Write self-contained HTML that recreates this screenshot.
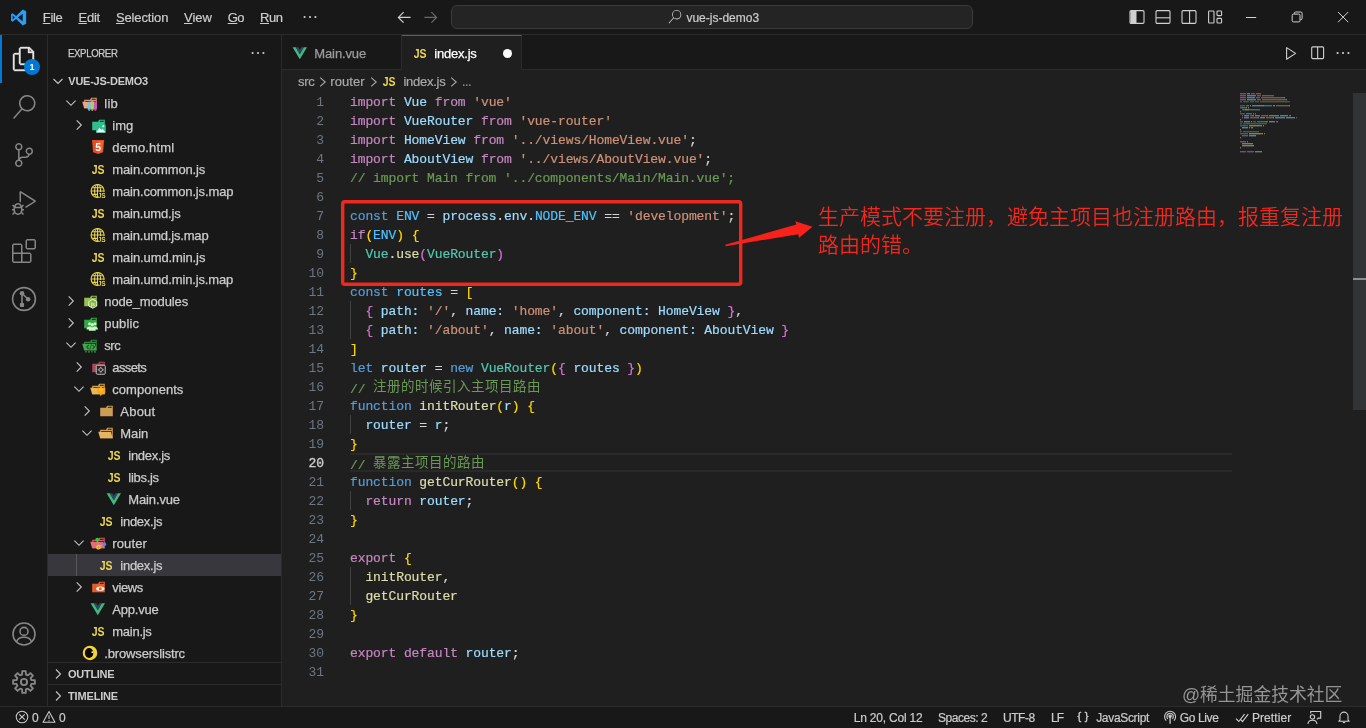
<!DOCTYPE html>
<html lang="zh">
<head>
<meta charset="utf-8">
<title>index.js - vue-js-demo3 - Visual Studio Code</title>
<style>
*{box-sizing:border-box;margin:0;padding:0}
html,body{width:1366px;height:728px;overflow:hidden;background:#181818}
body{position:relative;font-family:"Liberation Sans","Noto Sans CJK SC",sans-serif;font-size:13px;color:#cccccc;-webkit-font-smoothing:antialiased}
#root{position:absolute;left:0;top:0;width:1366px;height:728px;will-change:transform}
.abs{position:absolute}
svg{display:block;overflow:visible}
/* title bar */
#title{position:absolute;left:0;top:0;width:1366px;height:35px;background:#181818;border-bottom:1px solid #2b2b2b}
.menu{-webkit-text-stroke:0.200px currentColor;position:absolute;top:0px;height:35px;line-height:35px;font-size:13px;color:#cccccc;white-space:nowrap}
.menu u{text-decoration:underline;text-underline-offset:1px}
#cmd{position:absolute;left:451px;top:5px;width:522px;height:24px;border:1px solid #3b3b3b;border-radius:6px;background:#242424}
#cmd span{position:absolute;left:234.400px;top:1px;-webkit-text-stroke:0.200px currentColor;line-height:22px;font-size:12px;color:#cccccc;white-space:nowrap}
/* activity bar */
#act{position:absolute;left:0;top:35px;width:48px;height:671px;background:#181818;border-right:1px solid #2b2b2b}
#actind{position:absolute;left:0;top:35px;width:2px;height:48px;background:#0078d4}
#badge{position:absolute;left:24px;top:59px;width:16px;height:16px;border-radius:8px;background:#0078d4;color:#fff;font-size:9px;font-weight:bold;line-height:16px;text-align:center}
/* sidebar */
#side{position:absolute;left:48px;top:35px;width:234px;height:671px;background:#181818;border-right:1px solid #2b2b2b}
.tl{-webkit-text-stroke:0.250px currentColor;position:absolute;height:22px;line-height:22px;font-size:13px;color:#cccccc;white-space:nowrap}
.sel{position:absolute;left:48px;width:233px;height:22px;background:#37373d}
.jsic{position:absolute;width:16px;height:16px;line-height:16px;font-size:10.500px;font-weight:bold;color:#ecd84c;text-align:center;letter-spacing:-0.200px;transform:scaleY(1.160);transform-origin:50% 72%}
.hdr{position:absolute;margin-top:-1px;font-size:11px;font-weight:bold;color:#cccccc;white-space:nowrap;height:22px;line-height:22px}
/* editor */
#tabs{position:absolute;left:282px;top:35px;width:1084px;height:35px;background:#181818;border-bottom:1px solid #2b2b2b}
.tab{position:absolute;top:35px;height:35px;border-right:1px solid #2b2b2b}
#ed{position:absolute;left:282px;top:70px;width:1084px;height:636px;background:#1f1f1f}
.bc{-webkit-text-stroke:0.200px currentColor;position:absolute;top:71px;height:22px;line-height:22px;font-size:13px;color:#a9a9a9;white-space:nowrap}
.ln{position:absolute;left:282px;width:42px;height:19px;line-height:19px;text-align:right;font-family:"Liberation Mono","DejaVu Sans Mono",monospace;font-size:13px;letter-spacing:-0.1px;color:#6e7681}
.ln.cur{color:#cccccc;-webkit-text-stroke:0.350px #cccccc}
.cl{-webkit-text-stroke:0.200px currentColor;position:absolute;left:350px;height:19px;line-height:19px;white-space:pre;font-family:"Liberation Mono","DejaVu Sans Mono",monospace;font-size:13px;letter-spacing:-0.1px;color:#d4d4d4}
.cl .cjk{font-family:"Noto Sans CJK SC",sans-serif;font-size:13.500px;letter-spacing:0.500px;color:#6a9955;position:relative;top:-2px;-webkit-text-stroke:0}
.guide{position:absolute;left:350px;width:1px;height:19px;background:#404040}
#curline{position:absolute;left:350px;top:453px;width:882px;height:19px;border-top:2px solid #292929;border-bottom:2px solid #292929}
.minimap{position:absolute;left:1240px;top:93px}
#scroll{position:absolute;left:1353px;top:93px;width:13px;height:317px;background:#313334}
#scrollmark{position:absolute;left:1353px;top:278px;width:13px;height:2px;background:#8e8f90}
/* annotation */
#note{position:absolute;left:818px;top:201px;font-weight:350;width:540px;font-family:"Noto Sans CJK SC","Liberation Sans",sans-serif;font-size:21px;line-height:28px;color:#f3281d;white-space:nowrap}
#wm{position:absolute;left:1182px;top:682.500px;font-family:"Liberation Sans","Noto Sans CJK SC",sans-serif;font-size:17.800px;line-height:24px;color:#959595;white-space:nowrap}
/* status */
#status{position:absolute;left:0;top:706px;width:1366px;height:22px;background:#181818;border-top:1px solid #2b2b2b}
.st{-webkit-text-stroke:0.200px currentColor;position:absolute;top:708px;height:21px;line-height:21px;font-size:12px;color:#cccccc;white-space:nowrap}
</style>
</head>
<body>
<div id="root">
<!-- ===== editor area (drawn first) ===== -->
<div id="tabs"></div>
<div id="ed"></div>

<!-- tabs -->
<div class="tab" style="left:282px;width:120px;height:34px;background:#181818"></div>
<div class="tab" style="left:402px;width:120px;background:#1f1f1f;border-top:1px solid #0078d4;height:35px"></div>
<svg class="abs" style="left:291.800px;top:45px" width="16" height="16" viewBox="0 0 16 16"><path d="M0.600 2.300 H3.800 L7.800 9.200 L11.800 2.300 H15 L7.800 14.200 Z" fill="#41b883"/><path d="M3.800 2.300 H6.300 L7.800 4.900 L9.300 2.300 H11.800 L7.800 9.200 Z" fill="#35495e"/></svg>
<div class="tl" style="letter-spacing:-0.12px;left:314.3px;top:36px;height:35px;line-height:35px;color:#9d9d9d">Main.vue</div>
<span class="jsic" style="left:412px;top:46px">JS</span>
<div class="tl" style="letter-spacing:-0.22px;left:434.3px;top:36px;height:35px;line-height:35px;color:#ffffff">index.js</div>
<div class="abs" style="left:502.5px;top:48.800px;width:9px;height:9px;border-radius:5px;background:#ffffff"></div>

<!-- editor actions -->
<svg class="abs" style="left:1283px;top:45px" width="16" height="16" viewBox="0 0 16 16"><path d="M3.600 2.600 L12.600 8.400 L3.600 14.200 Z" fill="none" stroke="#d0d0d0" stroke-width="1.100" stroke-linejoin="round"/></svg>
<svg class="abs" style="left:1309px;top:45px" width="16" height="16" viewBox="0 0 16 16"><rect x="2.700" y="1.900" width="11.900" height="11.700" rx="1" fill="none" stroke="#d0d0d0" stroke-width="1.100"/><path d="M8.650 1.900 V13.600" stroke="#d0d0d0" stroke-width="1.100"/></svg>
<svg class="abs" style="left:1335px;top:45px" width="16" height="16" viewBox="0 0 16 16"><circle cx="2.6" cy="8" r="1.1" fill="#d0d0d0"/><circle cx="8" cy="8" r="1.1" fill="#d0d0d0"/><circle cx="13.4" cy="8" r="1.1" fill="#d0d0d0"/></svg>

<!-- breadcrumbs -->
<div class="bc" style="letter-spacing:-0.31px;left:298px">src</div>
<svg class="abs" style="left:314.800px;top:73.500px" width="16" height="16" viewBox="0 0 16 16"><path d="M5.200 3.600 L10.200 8 L5.200 12.400" fill="none" stroke="#a9a9a9" stroke-width="1.1"/></svg>
<div class="bc" style="letter-spacing:0.06px;left:330.3px">router</div>
<svg class="abs" style="left:366.200px;top:73.500px" width="16" height="16" viewBox="0 0 16 16"><path d="M5.200 3.600 L10.200 8 L5.200 12.400" fill="none" stroke="#a9a9a9" stroke-width="1.1"/></svg>
<span class="jsic" style="left:381px;top:74px">JS</span>
<div class="bc" style="letter-spacing:-0.25px;left:403.4px">index.js</div>
<svg class="abs" style="left:446px;top:73.500px" width="16" height="16" viewBox="0 0 16 16"><path d="M5.200 3.600 L10.200 8 L5.200 12.400" fill="none" stroke="#a9a9a9" stroke-width="1.1"/></svg>
<div class="bc" style="left:461.500px;transform:scaleX(0.740);transform-origin:0 50%">…</div>

<!-- code -->
<div id="curline"></div>
<div class="ln" style="top:93px">1</div>
<div class="cl" style="top:93px"><span style="color:#c586c0">import</span><span style="color:#d4d4d4"> </span><span style="color:#9cdcfe">Vue</span><span style="color:#d4d4d4"> </span><span style="color:#c586c0">from</span><span style="color:#d4d4d4"> </span><span style="color:#ce9178">'vue'</span></div>
<div class="ln" style="top:112px">2</div>
<div class="cl" style="top:112px"><span style="color:#c586c0">import</span><span style="color:#d4d4d4"> </span><span style="color:#9cdcfe">VueRouter</span><span style="color:#d4d4d4"> </span><span style="color:#c586c0">from</span><span style="color:#d4d4d4"> </span><span style="color:#ce9178">'vue-router'</span></div>
<div class="ln" style="top:131px">3</div>
<div class="cl" style="top:131px"><span style="color:#c586c0">import</span><span style="color:#d4d4d4"> </span><span style="color:#9cdcfe">HomeView</span><span style="color:#d4d4d4"> </span><span style="color:#c586c0">from</span><span style="color:#d4d4d4"> </span><span style="color:#ce9178">'../views/HomeView.vue'</span><span style="color:#d4d4d4">;</span></div>
<div class="ln" style="top:150px">4</div>
<div class="cl" style="top:150px"><span style="color:#c586c0">import</span><span style="color:#d4d4d4"> </span><span style="color:#9cdcfe">AboutView</span><span style="color:#d4d4d4"> </span><span style="color:#c586c0">from</span><span style="color:#d4d4d4"> </span><span style="color:#ce9178">'../views/AboutView.vue'</span><span style="color:#d4d4d4">;</span></div>
<div class="ln" style="top:169px">5</div>
<div class="cl" style="top:169px"><span style="color:#6a9955">// import Main from '../components/Main/Main.vue';</span></div>
<div class="ln" style="top:188px">6</div>
<div class="ln" style="top:207px">7</div>
<div class="cl" style="top:207px"><span style="color:#569cd6">const</span><span style="color:#d4d4d4"> </span><span style="color:#4fc1ff">ENV</span><span style="color:#d4d4d4"> = </span><span style="color:#9cdcfe">process</span><span style="color:#d4d4d4">.</span><span style="color:#9cdcfe">env</span><span style="color:#d4d4d4">.</span><span style="color:#4fc1ff">NODE_ENV</span><span style="color:#d4d4d4"> == </span><span style="color:#ce9178">'development'</span><span style="color:#d4d4d4">;</span></div>
<div class="ln" style="top:226px">8</div>
<div class="cl" style="top:226px"><span style="color:#c586c0">if</span><span style="color:#ffd700">(</span><span style="color:#4fc1ff">ENV</span><span style="color:#ffd700">)</span><span style="color:#d4d4d4"> </span><span style="color:#ffd700">{</span></div>
<div class="ln" style="top:245px">9</div>
<div class="guide" style="top:244px"></div>
<div class="cl" style="top:245px"><span style="color:#d4d4d4">  </span><span style="color:#4ec9b0">Vue</span><span style="color:#d4d4d4">.</span><span style="color:#dcdcaa">use</span><span style="color:#da70d6">(</span><span style="color:#4ec9b0">VueRouter</span><span style="color:#da70d6">)</span></div>
<div class="ln" style="top:264px">10</div>
<div class="cl" style="top:264px"><span style="color:#ffd700">}</span></div>
<div class="ln" style="top:283px">11</div>
<div class="cl" style="top:283px"><span style="color:#569cd6">const</span><span style="color:#d4d4d4"> </span><span style="color:#4fc1ff">routes</span><span style="color:#d4d4d4"> = </span><span style="color:#ffd700">[</span></div>
<div class="ln" style="top:302px">12</div>
<div class="guide" style="top:301px"></div>
<div class="cl" style="top:302px"><span style="color:#d4d4d4">  </span><span style="color:#da70d6">{</span><span style="color:#d4d4d4"> </span><span style="color:#9cdcfe">path:</span><span style="color:#d4d4d4"> </span><span style="color:#ce9178">'/'</span><span style="color:#d4d4d4">, </span><span style="color:#9cdcfe">name:</span><span style="color:#d4d4d4"> </span><span style="color:#ce9178">'home'</span><span style="color:#d4d4d4">, </span><span style="color:#9cdcfe">component:</span><span style="color:#d4d4d4"> </span><span style="color:#9cdcfe">HomeView</span><span style="color:#d4d4d4"> </span><span style="color:#da70d6">}</span><span style="color:#d4d4d4">,</span></div>
<div class="ln" style="top:321px">13</div>
<div class="guide" style="top:320px"></div>
<div class="cl" style="top:321px"><span style="color:#d4d4d4">  </span><span style="color:#da70d6">{</span><span style="color:#d4d4d4"> </span><span style="color:#9cdcfe">path:</span><span style="color:#d4d4d4"> </span><span style="color:#ce9178">'/about'</span><span style="color:#d4d4d4">, </span><span style="color:#9cdcfe">name:</span><span style="color:#d4d4d4"> </span><span style="color:#ce9178">'about'</span><span style="color:#d4d4d4">, </span><span style="color:#9cdcfe">component:</span><span style="color:#d4d4d4"> </span><span style="color:#9cdcfe">AboutView</span><span style="color:#d4d4d4"> </span><span style="color:#da70d6">}</span></div>
<div class="ln" style="top:340px">14</div>
<div class="cl" style="top:340px"><span style="color:#ffd700">]</span></div>
<div class="ln" style="top:359px">15</div>
<div class="cl" style="top:359px"><span style="color:#569cd6">let</span><span style="color:#d4d4d4"> </span><span style="color:#9cdcfe">router</span><span style="color:#d4d4d4"> = </span><span style="color:#569cd6">new</span><span style="color:#d4d4d4"> </span><span style="color:#4ec9b0">VueRouter</span><span style="color:#ffd700">(</span><span style="color:#da70d6">{</span><span style="color:#d4d4d4"> </span><span style="color:#9cdcfe">routes</span><span style="color:#d4d4d4"> </span><span style="color:#da70d6">}</span><span style="color:#ffd700">)</span></div>
<div class="ln" style="top:378px">16</div>
<div class="cl" style="top:378px"><span style="color:#6a9955">// </span><span class="cjk">注册的时候引入主项目路由</span></div>
<div class="ln" style="top:397px">17</div>
<div class="cl" style="top:397px"><span style="color:#569cd6">function</span><span style="color:#d4d4d4"> </span><span style="color:#dcdcaa">initRouter</span><span style="color:#ffd700">(</span><span style="color:#9cdcfe">r</span><span style="color:#ffd700">)</span><span style="color:#d4d4d4"> </span><span style="color:#ffd700">{</span></div>
<div class="ln" style="top:416px">18</div>
<div class="guide" style="top:415px"></div>
<div class="cl" style="top:416px"><span style="color:#d4d4d4">  </span><span style="color:#9cdcfe">router</span><span style="color:#d4d4d4"> = </span><span style="color:#9cdcfe">r</span><span style="color:#d4d4d4">;</span></div>
<div class="ln" style="top:435px">19</div>
<div class="cl" style="top:435px"><span style="color:#ffd700">}</span></div>
<div class="ln cur" style="top:454px">20</div>
<div class="cl" style="top:454px"><span style="color:#6a9955">// </span><span class="cjk">暴露主项目的路由</span></div>
<div class="ln" style="top:473px">21</div>
<div class="cl" style="top:473px"><span style="color:#569cd6">function</span><span style="color:#d4d4d4"> </span><span style="color:#dcdcaa">getCurRouter</span><span style="color:#ffd700">()</span><span style="color:#d4d4d4"> </span><span style="color:#ffd700">{</span></div>
<div class="ln" style="top:492px">22</div>
<div class="guide" style="top:491px"></div>
<div class="cl" style="top:492px"><span style="color:#d4d4d4">  </span><span style="color:#c586c0">return</span><span style="color:#d4d4d4"> </span><span style="color:#9cdcfe">router</span><span style="color:#d4d4d4">;</span></div>
<div class="ln" style="top:511px">23</div>
<div class="cl" style="top:511px"><span style="color:#ffd700">}</span></div>
<div class="ln" style="top:530px">24</div>
<div class="ln" style="top:549px">25</div>
<div class="cl" style="top:549px"><span style="color:#c586c0">export</span><span style="color:#d4d4d4"> </span><span style="color:#ffd700">{</span></div>
<div class="ln" style="top:568px">26</div>
<div class="guide" style="top:567px"></div>
<div class="cl" style="top:568px"><span style="color:#d4d4d4">  </span><span style="color:#dcdcaa">initRouter</span><span style="color:#d4d4d4">,</span></div>
<div class="ln" style="top:587px">27</div>
<div class="guide" style="top:586px"></div>
<div class="cl" style="top:587px"><span style="color:#d4d4d4">  </span><span style="color:#dcdcaa">getCurRouter</span></div>
<div class="ln" style="top:606px">28</div>
<div class="cl" style="top:606px"><span style="color:#ffd700">}</span></div>
<div class="ln" style="top:625px">29</div>
<div class="ln" style="top:644px">30</div>
<div class="cl" style="top:644px"><span style="color:#c586c0">export</span><span style="color:#d4d4d4"> </span><span style="color:#c586c0">default</span><span style="color:#d4d4d4"> </span><span style="color:#9cdcfe">router</span><span style="color:#d4d4d4">;</span></div>
<div class="ln" style="top:663px">31</div>
<svg class="minimap" width="120" height="70" viewBox="0 0 120 70" opacity="0.500"><rect x="0" y="0" width="6" height="1.4" fill="#c586c0"/><rect x="7" y="0" width="3" height="1.4" fill="#9cdcfe"/><rect x="11" y="0" width="4" height="1.4" fill="#c586c0"/><rect x="16" y="0" width="5" height="1.4" fill="#ce9178"/><rect x="0" y="2" width="6" height="1.4" fill="#c586c0"/><rect x="7" y="2" width="9" height="1.4" fill="#9cdcfe"/><rect x="17" y="2" width="4" height="1.4" fill="#c586c0"/><rect x="22" y="2" width="12" height="1.4" fill="#ce9178"/><rect x="0" y="4" width="6" height="1.4" fill="#c586c0"/><rect x="7" y="4" width="8" height="1.4" fill="#9cdcfe"/><rect x="16" y="4" width="4" height="1.4" fill="#c586c0"/><rect x="21" y="4" width="23" height="1.4" fill="#ce9178"/><rect x="44" y="4" width="1" height="1.4" fill="#d4d4d4"/><rect x="0" y="6" width="6" height="1.4" fill="#c586c0"/><rect x="7" y="6" width="9" height="1.4" fill="#9cdcfe"/><rect x="17" y="6" width="4" height="1.4" fill="#c586c0"/><rect x="22" y="6" width="24" height="1.4" fill="#ce9178"/><rect x="46" y="6" width="1" height="1.4" fill="#d4d4d4"/><rect x="0" y="8" width="2" height="1.4" fill="#6a9955"/><rect x="3" y="8" width="6" height="1.4" fill="#6a9955"/><rect x="10" y="8" width="4" height="1.4" fill="#6a9955"/><rect x="15" y="8" width="4" height="1.4" fill="#6a9955"/><rect x="20" y="8" width="30" height="1.4" fill="#6a9955"/><rect x="0" y="12" width="5" height="1.4" fill="#569cd6"/><rect x="6" y="12" width="3" height="1.4" fill="#4fc1ff"/><rect x="10" y="12" width="1" height="1.4" fill="#d4d4d4"/><rect x="12" y="12" width="7" height="1.4" fill="#9cdcfe"/><rect x="19" y="12" width="1" height="1.4" fill="#d4d4d4"/><rect x="20" y="12" width="3" height="1.4" fill="#9cdcfe"/><rect x="23" y="12" width="1" height="1.4" fill="#d4d4d4"/><rect x="24" y="12" width="8" height="1.4" fill="#4fc1ff"/><rect x="33" y="12" width="2" height="1.4" fill="#d4d4d4"/><rect x="36" y="12" width="13" height="1.4" fill="#ce9178"/><rect x="49" y="12" width="1" height="1.4" fill="#d4d4d4"/><rect x="0" y="14" width="2" height="1.4" fill="#c586c0"/><rect x="2" y="14" width="1" height="1.4" fill="#ffd700"/><rect x="3" y="14" width="3" height="1.4" fill="#4fc1ff"/><rect x="6" y="14" width="1" height="1.4" fill="#ffd700"/><rect x="8" y="14" width="1" height="1.4" fill="#ffd700"/><rect x="2" y="16" width="3" height="1.4" fill="#4ec9b0"/><rect x="5" y="16" width="1" height="1.4" fill="#d4d4d4"/><rect x="6" y="16" width="3" height="1.4" fill="#dcdcaa"/><rect x="9" y="16" width="1" height="1.4" fill="#da70d6"/><rect x="10" y="16" width="9" height="1.4" fill="#4ec9b0"/><rect x="19" y="16" width="1" height="1.4" fill="#da70d6"/><rect x="0" y="18" width="1" height="1.4" fill="#ffd700"/><rect x="0" y="20" width="5" height="1.4" fill="#569cd6"/><rect x="6" y="20" width="6" height="1.4" fill="#4fc1ff"/><rect x="13" y="20" width="1" height="1.4" fill="#d4d4d4"/><rect x="15" y="20" width="1" height="1.4" fill="#ffd700"/><rect x="2" y="22" width="1" height="1.4" fill="#da70d6"/><rect x="4" y="22" width="5" height="1.4" fill="#9cdcfe"/><rect x="10" y="22" width="3" height="1.4" fill="#ce9178"/><rect x="13" y="22" width="1" height="1.4" fill="#d4d4d4"/><rect x="15" y="22" width="5" height="1.4" fill="#9cdcfe"/><rect x="21" y="22" width="6" height="1.4" fill="#ce9178"/><rect x="27" y="22" width="1" height="1.4" fill="#d4d4d4"/><rect x="29" y="22" width="10" height="1.4" fill="#9cdcfe"/><rect x="40" y="22" width="8" height="1.4" fill="#9cdcfe"/><rect x="49" y="22" width="1" height="1.4" fill="#da70d6"/><rect x="50" y="22" width="1" height="1.4" fill="#d4d4d4"/><rect x="2" y="24" width="1" height="1.4" fill="#da70d6"/><rect x="4" y="24" width="5" height="1.4" fill="#9cdcfe"/><rect x="10" y="24" width="8" height="1.4" fill="#ce9178"/><rect x="18" y="24" width="1" height="1.4" fill="#d4d4d4"/><rect x="20" y="24" width="5" height="1.4" fill="#9cdcfe"/><rect x="26" y="24" width="7" height="1.4" fill="#ce9178"/><rect x="33" y="24" width="1" height="1.4" fill="#d4d4d4"/><rect x="35" y="24" width="10" height="1.4" fill="#9cdcfe"/><rect x="46" y="24" width="9" height="1.4" fill="#9cdcfe"/><rect x="56" y="24" width="1" height="1.4" fill="#da70d6"/><rect x="0" y="26" width="1" height="1.4" fill="#ffd700"/><rect x="0" y="28" width="3" height="1.4" fill="#569cd6"/><rect x="4" y="28" width="6" height="1.4" fill="#9cdcfe"/><rect x="11" y="28" width="1" height="1.4" fill="#d4d4d4"/><rect x="13" y="28" width="3" height="1.4" fill="#569cd6"/><rect x="17" y="28" width="9" height="1.4" fill="#4ec9b0"/><rect x="26" y="28" width="1" height="1.4" fill="#ffd700"/><rect x="27" y="28" width="1" height="1.4" fill="#da70d6"/><rect x="29" y="28" width="6" height="1.4" fill="#9cdcfe"/><rect x="36" y="28" width="1" height="1.4" fill="#da70d6"/><rect x="37" y="28" width="1" height="1.4" fill="#ffd700"/><rect x="0" y="30" width="2" height="1.4" fill="#6a9955"/><rect x="3" y="30" width="24" height="1.4" fill="#6a9955"/><rect x="0" y="32" width="8" height="1.4" fill="#569cd6"/><rect x="9" y="32" width="10" height="1.4" fill="#dcdcaa"/><rect x="19" y="32" width="1" height="1.4" fill="#ffd700"/><rect x="20" y="32" width="1" height="1.4" fill="#9cdcfe"/><rect x="21" y="32" width="1" height="1.4" fill="#ffd700"/><rect x="23" y="32" width="1" height="1.4" fill="#ffd700"/><rect x="2" y="34" width="6" height="1.4" fill="#9cdcfe"/><rect x="9" y="34" width="1" height="1.4" fill="#d4d4d4"/><rect x="11" y="34" width="1" height="1.4" fill="#9cdcfe"/><rect x="12" y="34" width="1" height="1.4" fill="#d4d4d4"/><rect x="0" y="36" width="1" height="1.4" fill="#ffd700"/><rect x="0" y="38" width="2" height="1.4" fill="#6a9955"/><rect x="3" y="38" width="16" height="1.4" fill="#6a9955"/><rect x="0" y="40" width="8" height="1.4" fill="#569cd6"/><rect x="9" y="40" width="12" height="1.4" fill="#dcdcaa"/><rect x="21" y="40" width="2" height="1.4" fill="#ffd700"/><rect x="24" y="40" width="1" height="1.4" fill="#ffd700"/><rect x="2" y="42" width="6" height="1.4" fill="#c586c0"/><rect x="9" y="42" width="6" height="1.4" fill="#9cdcfe"/><rect x="15" y="42" width="1" height="1.4" fill="#d4d4d4"/><rect x="0" y="44" width="1" height="1.4" fill="#ffd700"/><rect x="0" y="48" width="6" height="1.4" fill="#c586c0"/><rect x="7" y="48" width="1" height="1.4" fill="#ffd700"/><rect x="2" y="50" width="10" height="1.4" fill="#dcdcaa"/><rect x="12" y="50" width="1" height="1.4" fill="#d4d4d4"/><rect x="2" y="52" width="12" height="1.4" fill="#dcdcaa"/><rect x="0" y="54" width="1" height="1.4" fill="#ffd700"/><rect x="0" y="58" width="6" height="1.4" fill="#c586c0"/><rect x="7" y="58" width="7" height="1.4" fill="#c586c0"/><rect x="15" y="58" width="6" height="1.4" fill="#9cdcfe"/><rect x="21" y="58" width="1" height="1.4" fill="#d4d4d4"/></svg>
<div id="scroll"></div>
<div id="scrollmark"></div>

<!-- annotation -->

<svg class="abs" style="left:0;top:0" width="1366" height="728" viewBox="0 0 1366 728"><rect x="342.700" y="201.700" width="398" height="82.600" rx="2" fill="none" stroke="#f0281e" stroke-width="3.400"/><path d="M725.300 244.700 L796.500 224.500 L795.100 221.200 L812.500 226.700 L799.100 237.800 L798.200 234.200 L725.600 246.200 Z" fill="#f9221a"/></svg>
<div id="note">生产模式不要注册，避免主项目也注册路由，报重复注册<br>路由的错。</div>
<div id="wm">@稀土掘金技术社区</div>

<!-- ===== side bar ===== -->
<div id="side"></div>
<div class="tl" style="left:68.300px;top:36px;height:35px;line-height:35px;font-size:11px;color:#cccccc;letter-spacing:-0.400px;transform:scaleX(0.873);transform-origin:0 50%">EXPLORER</div>
<svg class="abs" style="left:250px;top:45px" width="16" height="16" viewBox="0 0 16 16"><circle cx="2.6" cy="8" r="1.1" fill="#cccccc"/><circle cx="8" cy="8" r="1.1" fill="#cccccc"/><circle cx="13.4" cy="8" r="1.1" fill="#cccccc"/></svg>
<svg class="abs" style="left:50px;top:73px" width="16" height="16" viewBox="0 0 16 16"><path d="M3.5 6 L8 10.5 L12.5 6" fill="none" stroke="#c5c5c5" stroke-width="1.1"/></svg>
<div class="hdr" style="letter-spacing:-0.24px;left:68.300px;top:71px">VUE-JS-DEMO3</div>
<svg class="abs" style="left:62.5px;top:95px" width="16" height="16" viewBox="0 0 16 16"><path d="M3.4 5.7 L8 10.3 L12.6 5.7" fill="none" stroke="#c5c5c5" stroke-width="1.1"/></svg>
<svg class="abs" style="left:82px;top:95px" width="16" height="16" viewBox="0 0 32 32"><path d="M27.4 5.5 H18.2 L16.1 9.7 H4.3 V26.5 H29.5 V5.5 Z M27.4 24.2 H6.6 V11.8 H27.4 Z M27.4 9.7 H19.2 L20.2 7.6 H27.3 Z" fill="#d99473" fill-rule="evenodd"/><path d="M25.7 13.7 H0.5 L4.3 26.5 H29.5 Z" fill="#eba682"/><rect x="11.500" y="13.500" width="5.600" height="16" fill="#6ec6ea"/><rect x="17.700" y="12.500" width="5.600" height="17" fill="#a6d65c"/><rect x="23.900" y="13.500" width="5.600" height="16" fill="#d552c0"/><rect x="12.500" y="29.500" width="3.600" height="1.800" fill="#6ec6ea"/><rect x="18.700" y="29.500" width="3.600" height="1.800" fill="#a6d65c"/><rect x="24.900" y="29.500" width="3.600" height="1.800" fill="#d552c0"/></svg>
<div class="tl" style="letter-spacing:0.19px;left:104.3px;top:93px">lib</div>
<svg class="abs" style="left:70.5px;top:117px" width="16" height="16" viewBox="0 0 16 16"><path d="M5.7 3.4 L10.3 8 L5.7 12.6" fill="none" stroke="#c5c5c5" stroke-width="1.1"/></svg>
<svg class="abs" style="left:90px;top:117px" width="16" height="16" viewBox="0 0 32 32"><path d="M27.5 5.5 H18.2 L16.1 9.7 H4.4 V26.5 H29.6 V5.5 Z M27.5 9.7 H19.3 L20.4 7.6 H27.5 Z" fill="#2fbf8e" fill-rule="evenodd"/><rect x="12" y="15" width="19.500" height="16" fill="#2fbf8e"/><path d="M12.500 31 L19 21.500 L22.500 26 L25 23.300 L31 31 Z" fill="#f2fff9"/><circle cx="26.500" cy="18.500" r="1.900" fill="#f2fff9"/></svg>
<div class="tl" style="letter-spacing:0.05px;left:112.3px;top:115px">img</div>
<svg class="abs" style="left:90px;top:139px" width="16" height="16" viewBox="0 0 16 16"><path d="M2 1 H14.200 L13.100 13.200 L8.100 15 L3.100 13.200 Z" fill="#e44d26"/><path d="M8.100 2 V14 L12.200 12.600 L13.100 2 Z" fill="#f16529"/><text x="8.100" y="11.600" font-family="Liberation Sans, sans-serif" font-weight="bold" font-size="10.500" text-anchor="middle" fill="#fff">5</text></svg>
<div class="tl" style="letter-spacing:0.13px;left:112.3px;top:137px">demo.html</div>
<span class="jsic" style="left:90.1px;top:161.5px">JS</span>
<div class="tl" style="letter-spacing:-0.12px;left:112.3px;top:159px">main.common.js</div>
<svg class="abs" style="left:90.3px;top:183px" width="16" height="16" viewBox="0 0 16 16"><g fill="none" stroke="#e8d44d" stroke-width="1.150"><circle cx="7.600" cy="8" r="6.500"/><ellipse cx="7.600" cy="8" rx="3" ry="6.500"/><path d="M1.100 8 H14.100 M2.300 4.700 H12.900 M2.300 11.300 H12.900 M7.600 1.500 V14.500"/></g><rect x="8" y="9.200" width="7.400" height="6" fill="#181818"/><text x="11.500" y="14.800" font-family="Liberation Sans, sans-serif" font-weight="bold" font-size="6.500" text-anchor="middle" fill="#e8d44d" letter-spacing="-0.300">JS</text></svg>
<div class="tl" style="letter-spacing:-0.14px;left:112.3px;top:181px">main.common.js.map</div>
<span class="jsic" style="left:90.1px;top:205.5px">JS</span>
<div class="tl" style="letter-spacing:-0.16px;left:112.3px;top:203px">main.umd.js</div>
<svg class="abs" style="left:90.3px;top:227px" width="16" height="16" viewBox="0 0 16 16"><g fill="none" stroke="#e8d44d" stroke-width="1.150"><circle cx="7.600" cy="8" r="6.500"/><ellipse cx="7.600" cy="8" rx="3" ry="6.500"/><path d="M1.100 8 H14.100 M2.300 4.700 H12.900 M2.300 11.300 H12.900 M7.600 1.500 V14.500"/></g><rect x="8" y="9.200" width="7.400" height="6" fill="#181818"/><text x="11.500" y="14.800" font-family="Liberation Sans, sans-serif" font-weight="bold" font-size="6.500" text-anchor="middle" fill="#e8d44d" letter-spacing="-0.300">JS</text></svg>
<div class="tl" style="letter-spacing:-0.19px;left:112.3px;top:225px">main.umd.js.map</div>
<span class="jsic" style="left:90.1px;top:249.5px">JS</span>
<div class="tl" style="letter-spacing:-0.11px;left:112.3px;top:247px">main.umd.min.js</div>
<svg class="abs" style="left:90.3px;top:271px" width="16" height="16" viewBox="0 0 16 16"><g fill="none" stroke="#e8d44d" stroke-width="1.150"><circle cx="7.600" cy="8" r="6.500"/><ellipse cx="7.600" cy="8" rx="3" ry="6.500"/><path d="M1.100 8 H14.100 M2.300 4.700 H12.900 M2.300 11.300 H12.900 M7.600 1.500 V14.500"/></g><rect x="8" y="9.200" width="7.400" height="6" fill="#181818"/><text x="11.500" y="14.800" font-family="Liberation Sans, sans-serif" font-weight="bold" font-size="6.500" text-anchor="middle" fill="#e8d44d" letter-spacing="-0.300">JS</text></svg>
<div class="tl" style="letter-spacing:-0.14px;left:112.3px;top:269px">main.umd.min.js.map</div>
<svg class="abs" style="left:62.5px;top:293px" width="16" height="16" viewBox="0 0 16 16"><path d="M5.7 3.4 L10.3 8 L5.7 12.6" fill="none" stroke="#c5c5c5" stroke-width="1.1"/></svg>
<svg class="abs" style="left:82px;top:293px" width="16" height="16" viewBox="0 0 32 32"><path d="M27.5 5.5 H18.2 L16.1 9.7 H4.4 V26.5 H29.6 V5.5 Z M27.5 9.7 H19.3 L20.4 7.6 H27.5 Z" fill="#96be52" fill-rule="evenodd"/><path d="M21.500 12.500 L29.500 17 V26 L21.500 30.500 L13.500 26 V17 Z" fill="#86b54a" stroke="#f1f8e4" stroke-width="1.800" stroke-linejoin="round"/><text x="21.700" y="25" font-size="9" font-family="Liberation Sans, sans-serif" font-weight="bold" text-anchor="middle" fill="#f1f8e4">js</text></svg>
<div class="tl" style="letter-spacing:-0.13px;left:104.3px;top:291px">node_modules</div>
<svg class="abs" style="left:62.5px;top:315px" width="16" height="16" viewBox="0 0 16 16"><path d="M5.7 3.4 L10.3 8 L5.7 12.6" fill="none" stroke="#c5c5c5" stroke-width="1.1"/></svg>
<svg class="abs" style="left:82px;top:315px" width="16" height="16" viewBox="0 0 32 32"><path d="M27.5 5.5 H18.2 L16.1 9.7 H4.4 V26.5 H29.6 V5.5 Z M27.5 9.7 H19.3 L20.4 7.6 H27.5 Z" fill="#37a845" fill-rule="evenodd"/><g fill="#c9f7c6"><circle cx="15" cy="17.500" r="3"/><circle cx="26" cy="17.500" r="3"/><circle cx="20.500" cy="19.500" r="3.300"/><path d="M9 29 C9 21.500 19 21.500 20 26 V29 Z M32 29 C32 21.500 22 21.500 21 26 V29 Z"/><path d="M13.500 31.500 C13.500 22 27.500 22 27.500 31.500 Z"/></g></svg>
<div class="tl" style="letter-spacing:0.14px;left:104.3px;top:313px">public</div>
<svg class="abs" style="left:62.5px;top:337px" width="16" height="16" viewBox="0 0 16 16"><path d="M3.4 5.7 L8 10.3 L12.6 5.7" fill="none" stroke="#c5c5c5" stroke-width="1.1"/></svg>
<svg class="abs" style="left:82px;top:337px" width="16" height="16" viewBox="0 0 32 32"><path d="M27.4 5.5 H18.2 L16.1 9.7 H4.3 V26.5 H29.5 V5.5 Z M27.4 24.2 H6.6 V11.8 H27.4 Z M27.4 9.7 H19.2 L20.2 7.6 H27.3 Z" fill="#2f8a3e" fill-rule="evenodd"/><path d="M25.7 13.7 H0.5 L4.3 26.5 H29.5 Z" fill="#45a552"/><path d="M13.500 16 L9.500 20 L13.500 24 M21 16 L25 20 L21 24" fill="none" stroke="#1f5f2b" stroke-width="2.600"/><path d="M15.500 25.500 L19 14.500" stroke="#1f5f2b" stroke-width="2"/><path d="M8 27 V31 M14 27 V31.500 M20 27 V31 M26 27 V31.500" stroke="#3f9f4a" stroke-width="2.400"/></svg>
<div class="tl" style="letter-spacing:-0.45px;left:104.3px;top:335px">src</div>
<svg class="abs" style="left:70.5px;top:359px" width="16" height="16" viewBox="0 0 16 16"><path d="M5.7 3.4 L10.3 8 L5.7 12.6" fill="none" stroke="#c5c5c5" stroke-width="1.1"/></svg>
<svg class="abs" style="left:90px;top:359px" width="16" height="16" viewBox="0 0 32 32"><path d="M27.5 5.5 H18.2 L16.1 9.7 H4.4 V26.5 H29.6 V5.5 Z M27.5 9.7 H19.3 L20.4 7.6 H27.5 Z" fill="#ab485b" fill-rule="evenodd"/><rect x="12.500" y="12.500" width="18" height="18" rx="2" fill="#2a2224" stroke="#c4c4c4" stroke-width="1.900"/><circle cx="21.500" cy="21.500" r="3.600" fill="none" stroke="#c4c4c4" stroke-width="1.800"/><path d="M21.500 15.500 V17.500 M21.500 25.500 V27.500 M15.500 21.500 H17.500 M25.500 21.500 H27.500" stroke="#c4c4c4" stroke-width="1.800"/></svg>
<div class="tl" style="letter-spacing:-0.63px;left:112.3px;top:357px">assets</div>
<svg class="abs" style="left:70.5px;top:381px" width="16" height="16" viewBox="0 0 16 16"><path d="M3.4 5.7 L8 10.3 L12.6 5.7" fill="none" stroke="#c5c5c5" stroke-width="1.1"/></svg>
<svg class="abs" style="left:90px;top:381px" width="16" height="16" viewBox="0 0 32 32"><path d="M27.4 5.5 H18.2 L16.1 9.7 H4.3 V26.5 H29.5 V5.5 Z M27.4 24.2 H6.6 V11.8 H27.4 Z M27.4 9.7 H19.2 L20.2 7.6 H27.3 Z" fill="#d6a248" fill-rule="evenodd"/><path d="M25.7 13.7 H0.5 L4.3 26.5 H29.5 Z" fill="#e9b658"/><path d="M14 13.500 H20 C19 10.500 25 10.500 24 13.500 H30.500 V24 H25 L21.500 31 L19 24 H14 Z" fill="#ffa41c"/><path d="M17 15.500 L27.500 15.500 L22 22 Z" fill="#ffd23f" opacity="0.800"/></svg>
<div class="tl" style="letter-spacing:0.02px;left:112.3px;top:379px">components</div>
<svg class="abs" style="left:78.5px;top:403px" width="16" height="16" viewBox="0 0 16 16"><path d="M5.7 3.4 L10.3 8 L5.7 12.6" fill="none" stroke="#c5c5c5" stroke-width="1.1"/></svg>
<svg class="abs" style="left:98px;top:403px" width="16" height="16" viewBox="0 0 32 32"><path d="M27.5 5.5 H18.2 L16.1 9.7 H4.4 V26.5 H29.6 V5.5 Z M27.5 9.7 H19.3 L20.4 7.6 H27.5 Z" fill="#cd9d58" fill-rule="evenodd"/></svg>
<div class="tl" style="letter-spacing:0.22px;left:120.3px;top:401px">About</div>
<svg class="abs" style="left:78.5px;top:425px" width="16" height="16" viewBox="0 0 16 16"><path d="M3.4 5.7 L8 10.3 L12.6 5.7" fill="none" stroke="#c5c5c5" stroke-width="1.1"/></svg>
<svg class="abs" style="left:98px;top:425px" width="16" height="16" viewBox="0 0 32 32"><path d="M27.4 5.5 H18.2 L16.1 9.7 H4.3 V26.5 H29.5 V5.5 Z M27.4 24.2 H6.6 V11.8 H27.4 Z M27.4 9.7 H19.2 L20.2 7.6 H27.3 Z" fill="#cfa052" fill-rule="evenodd"/><path d="M25.7 13.7 H0.5 L4.3 26.5 H29.5 Z" fill="#e3b565"/></svg>
<div class="tl" style="letter-spacing:-0.10px;left:120.3px;top:423px">Main</div>
<span class="jsic" style="left:106.1px;top:447.5px">JS</span>
<div class="tl" style="letter-spacing:-0.30px;left:128.3px;top:445px">index.js</div>
<span class="jsic" style="left:106.1px;top:469.5px">JS</span>
<div class="tl" style="letter-spacing:-0.29px;left:128.3px;top:467px">libs.js</div>
<svg class="abs" style="left:105.9px;top:491px" width="16" height="16" viewBox="0 0 16 16"><path d="M0.6 2.3 H3.8 L7.8 9.2 L11.8 2.3 H15 L7.8 14.2 Z" fill="#41b883"/><path d="M3.8 2.3 H6.3 L7.800 4.900 L9.300 2.300 H11.800 L7.800 9.200 Z" fill="#35495e"/></svg>
<div class="tl" style="letter-spacing:-0.14px;left:128.3px;top:489px">Main.vue</div>
<span class="jsic" style="left:98.1px;top:513.5px">JS</span>
<div class="tl" style="letter-spacing:-0.26px;left:120.3px;top:511px">index.js</div>
<svg class="abs" style="left:70.5px;top:535px" width="16" height="16" viewBox="0 0 16 16"><path d="M3.4 5.7 L8 10.3 L12.6 5.7" fill="none" stroke="#c5c5c5" stroke-width="1.1"/></svg>
<svg class="abs" style="left:90px;top:535px" width="16" height="16" viewBox="0 0 32 32"><path d="M27.4 5.5 H18.2 L16.1 9.7 H4.3 V26.5 H29.5 V5.5 Z M27.4 24.2 H6.6 V11.8 H27.4 Z M27.4 9.7 H19.2 L20.2 7.6 H27.3 Z" fill="#cd5b64" fill-rule="evenodd"/><path d="M25.7 13.7 H0.5 L4.3 26.5 H29.5 Z" fill="#e26d74"/><circle cx="14.500" cy="9.500" r="3.800" fill="#3cc444"/><circle cx="17" cy="24.500" r="3.400" fill="none" stroke="#f2d11e" stroke-width="2.600"/><circle cx="28.500" cy="18.500" r="3.900" fill="#4a8fe0"/><path d="M15 12 L17 21 M18 22.500 L26 19" stroke="#f3b9bd" stroke-width="1.200" opacity="0.700"/></svg>
<div class="tl" style="letter-spacing:0.12px;left:112.3px;top:533px">router</div>
<div class="sel" style="top:554px"></div><div class="abs" style="left:76px;top:554px;width:1px;height:22px;background:#585858"></div>
<span class="jsic" style="left:98.1px;top:557.5px">JS</span>
<div class="tl" style="letter-spacing:-0.26px;left:120.3px;top:555px">index.js</div>
<svg class="abs" style="left:70.5px;top:579px" width="16" height="16" viewBox="0 0 16 16"><path d="M5.7 3.4 L10.3 8 L5.7 12.6" fill="none" stroke="#c5c5c5" stroke-width="1.1"/></svg>
<svg class="abs" style="left:90px;top:579px" width="16" height="16" viewBox="0 0 32 32"><path d="M27.5 5.5 H18.2 L16.1 9.7 H4.4 V26.5 H29.6 V5.5 Z M27.5 9.7 H19.3 L20.4 7.6 H27.5 Z" fill="#e8602c" fill-rule="evenodd"/><path d="M11.500 19.500 C15 13.500 26 13.500 29.500 19.500 C26 25.500 15 25.500 11.500 19.500 Z" fill="#fff4ee"/><circle cx="20.500" cy="19.500" r="3" fill="#e8602c"/><rect x="9" y="10" width="2" height="16" fill="#c94f22" opacity="0.600"/></svg>
<div class="tl" style="letter-spacing:-0.40px;left:112.3px;top:577px">views</div>
<svg class="abs" style="left:89.9px;top:601px" width="16" height="16" viewBox="0 0 16 16"><path d="M0.6 2.3 H3.8 L7.8 9.2 L11.8 2.3 H15 L7.8 14.2 Z" fill="#41b883"/><path d="M3.8 2.3 H6.3 L7.800 4.900 L9.300 2.300 H11.800 L7.800 9.200 Z" fill="#35495e"/></svg>
<div class="tl" style="letter-spacing:-0.21px;left:112.3px;top:599px">App.vue</div>
<span class="jsic" style="left:90.1px;top:623.5px">JS</span>
<div class="tl" style="letter-spacing:-0.27px;left:112.3px;top:621px">main.js</div>
<svg class="abs" style="left:82px;top:645px" width="16" height="16" viewBox="0 0 16 16"><circle cx="8" cy="7.900" r="7.250" fill="#f3d632"/><ellipse cx="7.100" cy="8" rx="4.200" ry="5" fill="#0a0603"/><circle cx="10.300" cy="7.200" r="0.900" fill="#fbf3c0"/></svg>
<div class="tl" style="letter-spacing:-0.16px;left:104.3px;top:643px">.browserslistrc</div>
<div class="abs" style="left:48px;top:662px;width:233px;height:44px;background:#181818"></div>
<div class="abs" style="left:48px;top:662px;width:233px;height:1px;background:#2b2b2b"></div>
<div class="abs" style="left:48px;top:684px;width:233px;height:1px;background:#2b2b2b"></div>
<svg class="abs" style="left:50px;top:666px" width="16" height="16" viewBox="0 0 16 16"><path d="M6 3.5 L10.5 8 L6 12.5" fill="none" stroke="#c5c5c5" stroke-width="1.1"/></svg>
<div class="hdr" style="letter-spacing:-0.28px;left:68px;top:664px">OUTLINE</div>
<svg class="abs" style="left:50px;top:688px" width="16" height="16" viewBox="0 0 16 16"><path d="M6 3.5 L10.5 8 L6 12.5" fill="none" stroke="#c5c5c5" stroke-width="1.1"/></svg>
<div class="hdr" style="letter-spacing:-0.16px;left:68px;top:686px">TIMELINE</div>

<!-- ===== activity bar ===== -->
<div id="act"></div>
<div id="actind"></div>
<svg class="abs" style="left:12px;top:47px" width="24" height="24" viewBox="0 0 24 24"><path fill="#e2e2e2" stroke="#e2e2e2" stroke-width="0.400" d="M17.5 0h-9L7 1.5V6H2.5L1 7.5v15.07L2.5 24h12.07L16 22.57V18h4.7l1.3-1.43V4.5L17.5 0zm0 2.12l2.38 2.38H17.5V2.12zm-3 20.38h-12v-15H7v9.07L8.5 18h6v4.5zm6-6h-12v-15H16V6h4.5v10.5z"/></svg>
<div id="badge">1</div>
<svg class="abs" style="left:12px;top:95px" width="24" height="24" viewBox="0 0 24 24"><path fill="#868686" d="M15.25 0a8.25 8.25 0 0 0-6.18 13.72L1 22.88l1.12 1 8.05-9.12A8.251 8.251 0 1 0 15.25.01V0zm0 15a6.75 6.75 0 1 1 0-13.5 6.75 6.75 0 0 1 0 13.5z"/></svg>
<svg class="abs" style="left:12px;top:143px" width="24" height="24" viewBox="0 0 24 24"><path fill="#868686" d="M21.007 8.222A3.738 3.738 0 0 0 15.045 5.2a3.737 3.737 0 0 0 1.156 6.583 2.988 2.988 0 0 1-2.668 1.67h-2.99a4.456 4.456 0 0 0-2.989 1.165V7.4a3.737 3.737 0 1 0-1.494 0v9.117a3.776 3.776 0 1 0 1.816.099 2.99 2.99 0 0 1 2.668-1.667h2.99a4.484 4.484 0 0 0 4.223-3.039 3.736 3.736 0 0 0 3.25-3.687zM4.565 3.738a2.242 2.242 0 1 1 4.484 0 2.242 2.242 0 0 1-4.484 0zm4.484 16.441a2.242 2.242 0 1 1-4.484 0 2.242 2.242 0 0 1 4.484 0zm8.221-9.715a2.242 2.242 0 1 1 0-4.485 2.242 2.242 0 0 1 0 4.485z"/></svg>
<svg class="abs" style="left:12px;top:191px" width="24" height="24" viewBox="0 0 24 24"><path fill="#868686" d="M10.94 13.5l-1.32 1.32a3.73 3.73 0 0 0-7.24 0L1.06 13.5 0 14.56l1.72 1.72-.22.22V18H0v1.5h1.5v.08c.077.489.214.966.41 1.42L0 22.94 1.06 24l1.65-1.65A4.308 4.308 0 0 0 6 24a4.31 4.31 0 0 0 3.29-1.65L10.94 24 12 22.94 10.09 21c.198-.464.336-.951.41-1.45v-.1H12V18h-1.5v-1.5l-.22-.22L12 14.56l-1.06-1.06zM6 13.5a2.25 2.25 0 0 1 2.25 2.25h-4.5A2.25 2.25 0 0 1 6 13.5zm3 6a3.33 3.33 0 0 1-3 3 3.33 3.33 0 0 1-3-3v-2.25h6v2.25zm14.76-9.9v1.26L13.5 17.37V15.6l8.5-5.37L9 2v9.46a5.07 5.07 0 0 0-1.5-.72V.63L8.64 0l15.12 9.6z"/></svg>
<svg class="abs" style="left:12px;top:239px" width="24" height="24" viewBox="0 0 24 24"><path fill="#868686" d="M13.5 1.5L15 0h7.5L24 1.5V9l-1.5 1.5H15L13.5 9V1.5zm1.5 0V9h7.5V1.5H15zM0 15V6l1.5-1.5H9L10.500 6v7.5H18l1.5 1.5v7.5L18 24H1.5L0 22.5V15zm9-1.5V6H1.5v7.5H9zM9 15H1.5v7.5H9V15zm1.5 7.5H18V15h-7.5v7.5z"/></svg>
<svg class="abs" style="left:12px;top:287px" width="24" height="24" viewBox="0 0 24 24"><g fill="none" stroke="#868686" stroke-width="1.600"><circle cx="12" cy="12" r="11.400"/><path d="M10 6.200 V18 M10 6.200 L16.100 12.200"/></g><circle cx="10" cy="6.200" r="2.300" fill="#868686"/><rect x="7.900" y="15.900" width="4.200" height="4.200" rx="0.800" fill="#868686"/><circle cx="16.100" cy="12.200" r="2.300" fill="#868686"/></svg>
<svg class="abs" style="left:12px;top:622px" width="24" height="24" viewBox="0 0 24 24"><g fill="none" stroke="#868686" stroke-width="1.6"><circle cx="12" cy="12" r="11"/><circle cx="12" cy="9.4" r="4"/><path d="M4.6 20 C6 13.6 18 13.6 19.4 20"/></g></svg>
<svg class="abs" style="left:12px;top:670px" width="24" height="24" viewBox="0 0 24 24"><g fill="none" stroke="#868686" stroke-width="1.900" stroke-linejoin="round"><circle cx="12" cy="12" r="3.100"/><path d="M10.09 4.54 L10.25 1.14 L13.75 1.14 L13.91 4.54 L15.93 5.38 L18.44 3.08 L20.92 5.56 L18.62 8.07 L19.46 10.09 L22.86 10.25 L22.86 13.75 L19.46 13.91 L18.62 15.93 L20.92 18.44 L18.44 20.92 L15.93 18.62 L13.91 19.46 L13.75 22.86 L10.25 22.86 L10.09 19.46 L8.07 18.62 L5.56 20.92 L3.08 18.44 L5.38 15.93 L4.54 13.91 L1.14 13.75 L1.14 10.25 L4.54 10.09 L5.38 8.07 L3.08 5.56 L5.56 3.08 L8.07 5.38 Z"/></g></svg>

<!-- ===== title bar ===== -->
<div id="title"></div>
<svg class="abs" style="left:10px;top:9px" width="17" height="17" viewBox="0 0 100 100"><path d="M74.9 3.6 L36 41.4 15.6 25.6 6 30.4 V69.6 L15.6 74.4 36 58.600 74.900 96.400 95 86.600 V13.400 Z M74.400 28.600 V71.400 L46.400 50 Z M16 38.600 L28 50 16 61.400 Z" fill="#2a9df4" fill-rule="evenodd"/></svg>
<div class="menu" style="letter-spacing:-0.32px;left:42.8px"><u>F</u>ile</div>
<div class="menu" style="letter-spacing:-0.20px;left:78.4px"><u>E</u>dit</div>
<div class="menu" style="letter-spacing:-0.14px;left:116px"><u>S</u>election</div>
<div class="menu" style="letter-spacing:-0.04px;left:184px"><u>V</u>iew</div>
<div class="menu" style="letter-spacing:-0.48px;left:227.7px"><u>G</u>o</div>
<div class="menu" style="letter-spacing:-0.39px;left:260px"><u>R</u>un</div>
<svg class="abs" style="left:302px;top:9px" width="16" height="16" viewBox="0 0 16 16"><circle cx="2.6" cy="8" r="1.1" fill="#cccccc"/><circle cx="8" cy="8" r="1.1" fill="#cccccc"/><circle cx="13.4" cy="8" r="1.1" fill="#cccccc"/></svg>
<svg class="abs" style="left:396px;top:9px" width="16" height="16" viewBox="0 0 16 16"><path d="M14.6 8.400 H2.800 M7.600 3.200 L2.400 8.400 L7.600 13.600" fill="none" stroke="#d0d0d0" stroke-width="1.2"/></svg>
<svg class="abs" style="left:423px;top:9px" width="16" height="16" viewBox="0 0 16 16"><path d="M1.4 8.400 H13.200 M8.400 3.200 L13.600 8.400 L8.400 13.600" fill="none" stroke="#6a6a6a" stroke-width="1.2"/></svg>
<div id="cmd"><svg class="abs" style="left:216px;top:4.200px" width="13.600" height="13.600" viewBox="0 0 24 24"><path fill="#cccccc" d="M15.25 0a8.25 8.25 0 0 0-6.180 13.720L1 22.880l1.120 1 8.050-9.120A8.251 8.251 0 1 0 15.250.010V0zm0 15a6.750 6.750 0 1 1 0-13.500 6.750 6.750 0 0 1 0 13.500z"/></svg><span>vue-js-demo3</span></div>
<!-- layout controls -->
<svg class="abs" style="left:1129px;top:9px" width="16" height="16" viewBox="0 0 16 16"><rect x="1" y="1.600" width="14" height="12.800" rx="1.200" fill="none" stroke="#d0d0d0" stroke-width="1.100"/><rect x="1.500" y="2" width="6" height="12" fill="#d0d0d0"/></svg>
<svg class="abs" style="left:1155px;top:9px" width="16" height="16" viewBox="0 0 16 16"><rect x="1" y="1.600" width="14" height="12.800" rx="1.200" fill="none" stroke="#d0d0d0" stroke-width="1.100"/><path d="M1 8.800 H15" stroke="#d0d0d0" stroke-width="1.100"/></svg>
<svg class="abs" style="left:1181px;top:9px" width="16" height="16" viewBox="0 0 16 16"><rect x="1" y="1.600" width="14" height="12.800" rx="1.200" fill="none" stroke="#d0d0d0" stroke-width="1.100"/><path d="M8.600 1.600 V14.400" stroke="#d0d0d0" stroke-width="1.100"/></svg>
<svg class="abs" style="left:1207px;top:9px" width="16" height="16" viewBox="0 0 16 16"><g fill="none" stroke="#d0d0d0" stroke-width="1.100"><rect x="1.600" y="2" width="5.400" height="12" rx="0.800"/><rect x="10" y="2" width="4.600" height="4.600" rx="0.800"/><rect x="10" y="9.400" width="4.600" height="4.600" rx="0.800"/></g></svg>
<svg class="abs" style="left:1243px;top:9px" width="16" height="16" viewBox="0 0 16 16"><path d="M3 8.500 H13.200" stroke="#d0d0d0" stroke-width="1"/></svg>
<svg class="abs" style="left:1289px;top:9px" width="16" height="16" viewBox="0 0 16 16"><g fill="none" stroke="#d0d0d0" stroke-width="1"><rect x="3.200" y="5.100" width="7.800" height="7.800" rx="1.200"/><path d="M5.400 5 V4.200 Q5.400 3 6.600 3 H11.800 Q13.100 3 13.100 4.200 V9.400 Q13.100 10.700 11.800 10.700 H11.200"/></g></svg>
<svg class="abs" style="left:1335px;top:9px" width="16" height="16" viewBox="0 0 16 16"><path d="M3 3 L13.200 13.200 M13.200 3 L3 13.200" stroke="#d0d0d0" stroke-width="1"/></svg>

<!-- ===== status bar ===== -->
<div id="status"></div>
<svg class="abs" style="left:15px;top:710px" width="14" height="14" viewBox="0 0 16 16"><g fill="none" stroke="#cccccc" stroke-width="1.200"><circle cx="8" cy="8" r="6.600"/><path d="M4.900 4.900 L11.100 11.100 M11.100 4.900 L4.900 11.100"/></g></svg>
<div class="st" style="left:32px">0</div>
<svg class="abs" style="left:42px;top:710px" width="14" height="14" viewBox="0 0 16 16"><g fill="none" stroke="#cccccc" stroke-width="1.200"><path d="M8 1.800 L14.800 14 H1.200 Z" stroke-linejoin="round"/><path d="M8 6 V10.400 M8 11.600 V12.800"/></g></svg>
<div class="st" style="left:59px">0</div>
<div class="st" style="letter-spacing:-0.21px;left:853.8px">Ln 20, Col 12</div>
<div class="st" style="letter-spacing:-0.45px;left:937.9px">Spaces: 2</div>
<div class="st" style="letter-spacing:-0.44px;left:1003px">UTF-8</div>
<div class="st" style="letter-spacing:-0.90px;left:1051px">LF</div>
<div class="st" style="left:1077.600px;top:706.400px;font-size:11px;letter-spacing:3.600px;-webkit-text-stroke:0.400px currentColor">{}</div>
<div class="st" style="letter-spacing:-0.32px;left:1096.2px">JavaScript</div>
<svg class="abs" style="left:1163.700px;top:710.500px" width="12.200" height="13.200" viewBox="0 0 14 15"><g fill="none" stroke="#cccccc" stroke-width="1.500"><circle cx="7" cy="6" r="1.300" fill="#cccccc"/><path d="M7 7 V14.500"/><path d="M4.400 8.900 A3.700 3.700 0 1 1 9.600 8.900" stroke-width="1.300"/><path d="M2.600 11 A6.300 6.300 0 1 1 11.400 11" stroke-width="1.300"/></g></svg>
<div class="st" style="letter-spacing:-0.39px;left:1179.8px">Go Live</div>
<svg class="abs" style="left:1234.600px;top:710.500px" width="16" height="14" viewBox="0 0 18 16"><path d="M1 8.600 L4.200 12 L10.800 3.600 M6.400 9.800 L8.400 12 L15 3.600" fill="none" stroke="#cccccc" stroke-width="1.300"/></svg>
<div class="st" style="letter-spacing:0.10px;left:1251.9px">Prettier</div>
<svg class="abs" style="left:1306.800px;top:709.500px" width="15" height="15" viewBox="0 0 16 16"><g fill="none" stroke="#cccccc" stroke-width="1.200"><path d="M4 3.600 V1.600 H14.600 V8.600 H12 L10.600 10"/><circle cx="5.800" cy="7.400" r="2.300"/><path d="M1 15 C1.400 9.600 10.200 9.600 10.600 15"/></g></svg>
<svg class="abs" style="left:1337px;top:710px" width="14" height="14" viewBox="0 0 16 16"><g fill="none" stroke="#cccccc" stroke-width="1.200"><path d="M3.400 11.600 V7 A4.600 4.600 0 0 1 12.600 7 V11.600 L14 12.800 H2 Z" stroke-linejoin="round"/><path d="M6.600 14.400 H9.400"/></g></svg>
</div>
</body>
</html>
